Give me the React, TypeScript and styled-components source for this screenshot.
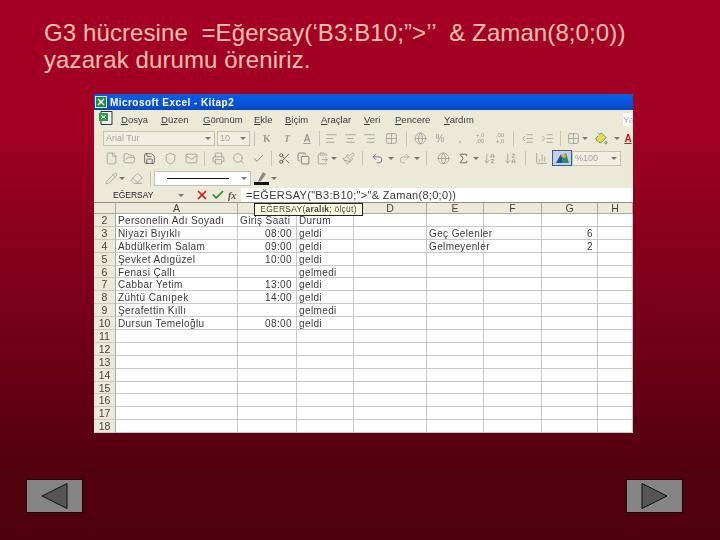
import React from "react";
import styled, { createGlobalStyle } from "styled-components";
import {
  AlignCenter,
  AlignLeft,
  AlignRight,
  ArrowDownAZ,
  ArrowDownZA,
  ChartColumn,
  Check,
  ClipboardPaste,
  Copy,
  Eraser,
  File,
  FolderOpen,
  Globe,
  Grid2x2,
  IndentDecrease,
  IndentIncrease,
  Mail,
  Paintbrush,
  PaintBucket,
  Pencil,
  Printer,
  Redo2,
  Save,
  Scissors,
  Search,
  Shield,
  Sigma,
  Undo2,
  X,
} from "lucide-react";

const GlobalStyle = createGlobalStyle`
    html, body {
        margin: 0;
        padding: 0;
    }
    body {
        width: 720px;
        height: 540px;
        overflow: hidden;
    }
`;

const Slide = styled.div`
    width: 720px;
    height: 540px;
    box-sizing: border-box;
    display: flex;
    flex-direction: column;
    background: linear-gradient(180deg, #a30024 0%, #a00022 25%, #52000f 87%, #4f000f 100%);
    font-family: "Liberation Sans", Arial, sans-serif;
`;

const Heading = styled.h1`
    margin: 0;
    height: 94px;
    box-sizing: border-box;
    padding: 19px 0 0 44px;
    color: #ffc0ae;
    font-size: 24px;
    font-weight: normal;
    line-height: 27px;
    letter-spacing: 0.1px;
    white-space: pre-wrap;
`;

const ExcelWindow = styled.div`
    position: relative;
    width: 539px;
    margin-left: 94px;
    background: #ece9d8;
    filter: blur(0.4px);
`;

const TitleBar = styled.div`
    height: 16px;
    display: flex;
    align-items: center;
    gap: 3px;
    padding-left: 1px;
    background: linear-gradient(180deg, #0a5ce6 0%, #0650d8 70%, #0a46b8 100%);
    color: #ffffff;
    font-size: 10px;
    font-weight: bold;
    letter-spacing: 0.45px;
`;

const MenuBar = styled.div`
    height: 18px;
    display: flex;
    align-items: center;
    padding-left: 4px;
    color: #3a3a3a;
    font-size: 9.5px;
`;

const MenuItem = styled.span<{ $w: number }>`
    width: ${(p) => p.$w}px;
    flex: none;
`;

const Mnemonic = styled.span`
    text-decoration: underline;
`;

const AskBox = styled.div`
    margin-left: 21px;
    width: 10px;
    height: 13px;
    background: #ffffff;
    color: #aaaaaa;
    line-height: 13px;
    overflow: hidden;
`;

const Toolbar = styled.div<{ $h: number }>`
    height: ${(p) => p.$h}px;
    display: flex;
    align-items: center;
    padding-left: 9px;
    overflow: hidden;
`;

const Tool = styled.div<{ $w: number; $c?: string }>`
    width: ${(p) => p.$w}px;
    height: 16px;
    flex: none;
    display: flex;
    align-items: center;
    justify-content: center;
    color: ${(p) => p.$c || "#9c9c94"};
    font-size: 10px;
`;

const ActiveTool = styled(Tool)`
    box-sizing: border-box;
    background: #c6d0e4;
    border: 1px solid #3a5a96;
`;

const Letter = styled.span<{ $serif?: boolean; $italic?: boolean; $under?: boolean }>`
    font-family: ${(p) => (p.$serif ? '"Liberation Serif", serif' : '"Liberation Sans", sans-serif')};
    font-weight: bold;
    font-style: ${(p) => (p.$italic ? "italic" : "normal")};
    text-decoration: ${(p) => (p.$under ? "underline" : "none")};
    font-size: 10px;
`;

const TinyDigits = styled.span`
    font-size: 6px;
    line-height: 6px;
    text-align: center;
`;

const Sep = styled.div<{ $gap?: number }>`
    width: 1px;
    height: 15px;
    flex: none;
    margin: 0 ${(p) => p.$gap ?? 3}px;
    background: #c8c5b4;
`;

const Arrow = styled.div`
    width: 6px;
    flex: none;
    height: 0;
    box-sizing: border-box;
    border-style: solid;
    border-width: 3px 3px 0;
    border-color: #777777 transparent transparent;
`;

const SelectBox = styled.div<{ $w: number; $bg?: string }>`
    width: ${(p) => p.$w}px;
    height: 15px;
    flex: none;
    box-sizing: border-box;
    margin-right: 2px;
    display: flex;
    align-items: center;
    justify-content: space-between;
    padding: 0 3px 0 2px;
    border: 1px solid #c4c2b2;
    background: ${(p) => p.$bg || "#f1efe2"};
    color: #a5a5a0;
    font-size: 9px;
`;

const LineSample = styled.div`
    width: 62px;
    height: 1px;
    margin-left: 10px;
    background: #111111;
`;

const FormulaBar = styled.div`
    height: 14px;
    display: flex;
    align-items: center;
    background: #ece9d8;
`;

const NameBox = styled.div`
    flex: none;
    display: flex;
    align-items: center;
    justify-content: space-between;
    padding: 0 6px 0 19px;
    box-sizing: border-box;
    width: 96px;
    color: #222222;
    font-size: 8.5px;
`;

const FormulaIcons = styled.div`
    width: 51px;
    flex: none;
    box-sizing: border-box;
    padding-left: 4px;
    display: flex;
    align-items: center;
    gap: 1px;
`;

const Fx = styled.span`
    font-family: "Liberation Serif", serif;
    font-size: 10px;
    font-style: italic;
    font-weight: bold;
    color: #555555;
    margin-left: 2px;
`;

const FormulaInput = styled.div`
    flex: 1;
    height: 14px;
    line-height: 14px;
    padding-left: 5px;
    background: #ffffff;
    color: #3a3a3a;
    font-size: 11px;
    letter-spacing: 0.3px;
    white-space: pre;
`;

const Sheet = styled.div`
    display: grid;
    grid-template-columns: 22px 122px 59px 57px 73px 57px 58px 56px 35px;
    grid-template-rows: 12px;
    grid-auto-rows: 12.9px;
    background: #ffffff;
    font-size: 10px;
    color: #3a3a3a;
    overflow: hidden;
`;

const ColHead = styled.div`
    box-sizing: border-box;
    text-align: center;
    line-height: 11px;
    background: #ece9d8;
    border-top: 1px solid #8f8f88;
    border-right: 1px solid #a9a89a;
    border-bottom: 1px solid #a9a89a;
    font-size: 10.5px;
    color: #444444;
`;

const RowHead = styled.div`
    box-sizing: border-box;
    text-align: center;
    line-height: 13px;
    background: #ece9d8;
    border-right: 1px solid #a9a89a;
    border-bottom: 1px solid #c9c8bc;
    font-size: 10.5px;
    color: #444444;
`;

const Cell = styled.div<{ $right?: boolean }>`
    box-sizing: border-box;
    line-height: 13.5px;
    padding: 0 ${(p) => (p.$right ? 4 : 2)}px 0 2px;
    text-align: ${(p) => (p.$right ? "right" : "left")};
    border-right: 1px solid #c8c8c8;
    border-bottom: 1px solid #c8c8c8;
    letter-spacing: 0.38px;
    white-space: nowrap;
`;

const Tooltip = styled.div`
    position: absolute;
    left: 160px;
    top: 109px;
    width: 109px;
    height: 13px;
    box-sizing: border-box;
    border: 1px solid #222222;
    background: #ffffe1;
    color: #444444;
    font-size: 8.5px;
    letter-spacing: 0.25px;
    line-height: 11px;
    text-align: center;
    white-space: nowrap;
`;

const Footer = styled.div`
    display: flex;
    justify-content: space-between;
    padding: 46px 37px 0 26px;
`;

const NavButton = styled.button`
    width: 57px;
    height: 34px;
    padding: 0;
    display: flex;
    align-items: center;
    justify-content: center;
    border: 1px solid #1a0a0a;
    background: #848484;
`;

const icon = { size: 13, strokeWidth: 1.5 };

const ExcelIcon = ({ size }: { size: number }) => (
  <svg width={size} height={size} viewBox="0 0 12 12">
    <rect x="0.5" y="0.5" width="11" height="11" fill="#1f8a3c" stroke="#d8ead8" />
    <path d="M3 3l6 6M9 3l-6 6" stroke="#ffffff" strokeWidth="1.5" />
  </svg>
);

const SheetDocIcon = () => (
  <svg width="16" height="15" viewBox="0 0 16 15">
    <path d="M3 .5h11v13H3z" fill="#f4f4ee" stroke="#333333" />
    <rect x="1" y="2" width="9" height="8" fill="#2a9a4a" />
    <path d="M3 4l5 4M8 4l-5 4" stroke="#ffffff" />
  </svg>
);

const PenLine = () => (
  <svg width="18" height="15" viewBox="0 0 18 15">
    <path d="M10 1l3 2-5 7-3 1 1-3z" fill="#8a8a80" />
    <rect x="1" y="11" width="15" height="3" fill="#111111" />
  </svg>
);

const DrawingIcon = () => (
  <svg width="15" height="14" viewBox="0 0 15 14">
    <path d="M1 12L6 3l2 9z" fill="#1d4f9c" />
    <path d="M7 12V5l4-3 3 10z" fill="#2a8a6a" />
    <circle cx="9" cy="5" r="2" fill="#e6b422" />
  </svg>
);

const menus: [string, string, number][] = [
  ["D", "osya", 40],
  ["D", "üzen", 42],
  ["G", "örünüm", 51],
  ["E", "kle", 31],
  ["B", "içim", 36],
  ["A", "raçlar", 43],
  ["V", "eri", 31],
  ["P", "encere", 49],
  ["Y", "ardım", 158],
];

const columns = ["A", "", "", "D", "E", "F", "G", "H"];

type Row = { n: number; name?: string; time?: string; state?: string; e?: string; g?: string };

const rows: Row[] = [
  { n: 2, name: "Personelin Adı Soyadı", time: "Giriş Saati", state: "Durum" },
  { n: 3, name: "Niyazi Bıyıklı", time: "08:00", state: "geldi", e: "Geç Gelenler", g: "6" },
  { n: 4, name: "Abdülkerim Salam", time: "09:00", state: "geldi", e: "Gelmeyenler", g: "2" },
  { n: 5, name: "Şevket Adıgüzel", time: "10:00", state: "geldi" },
  { n: 6, name: "Fenasi Çallı", state: "gelmedi" },
  { n: 7, name: "Cabbar Yetim", time: "13:00", state: "geldi" },
  { n: 8, name: "Zühtü Canıpek", time: "14:00", state: "geldi" },
  { n: 9, name: "Şerafettin Kıllı", state: "gelmedi" },
  { n: 10, name: "Dursun Temeloğlu", time: "08:00", state: "geldi" },
  { n: 11 },
  { n: 12 },
  { n: 13 },
  { n: 14 },
  { n: 15 },
  { n: 16 },
  { n: 17 },
  { n: 18 },
];

export default function App() {
  return (
    <Slide>
      <GlobalStyle />
      <Heading>{"G3 hücresine  =Eğersay(‘B3:B10;”>’’  & Zaman(8;0;0))\nyazarak durumu öreniriz."}</Heading>
      <ExcelWindow>
        <TitleBar>
          <ExcelIcon size={12} />
          Microsoft Excel - Kitap2
        </TitleBar>
        <MenuBar>
          <MenuItem $w={23}>
            <SheetDocIcon />
          </MenuItem>
          {menus.map(([first, rest, w], i) => (
            <MenuItem key={i} $w={w}>
              <Mnemonic>{first}</Mnemonic>
              {rest}
            </MenuItem>
          ))}
          <AskBox>Ya</AskBox>
        </MenuBar>
        <Toolbar $h={20}>
          <SelectBox $w={112}>
            Arial Tur
            <Arrow />
          </SelectBox>
          <SelectBox $w={33}>
            10
            <Arrow />
          </SelectBox>
          <Sep $gap={2} />
          <Tool $w={20}><Letter $serif>K</Letter></Tool>
          <Tool $w={20}><Letter $serif $italic>T</Letter></Tool>
          <Tool $w={20}><Letter $under>A</Letter></Tool>
          <Sep $gap={2} />
          <Tool $w={19}><AlignLeft {...icon} /></Tool>
          <Tool $w={19}><AlignCenter {...icon} /></Tool>
          <Tool $w={19}><AlignRight {...icon} /></Tool>
          <Tool $w={24}><Grid2x2 {...icon} /></Tool>
          <Sep />
          <Tool $w={20}><Globe {...icon} /></Tool>
          <Tool $w={20}>%</Tool>
          <Tool $w={20}>,</Tool>
          <Tool $w={20}><TinyDigits>+,0<br />,00</TinyDigits></Tool>
          <Tool $w={20}><TinyDigits>,00<br />+,0</TinyDigits></Tool>
          <Sep />
          <Tool $w={20}><IndentDecrease {...icon} /></Tool>
          <Tool $w={20}><IndentIncrease {...icon} /></Tool>
          <Sep />
          <Tool $w={18}><Grid2x2 {...icon} /></Tool>
          <Arrow />
          <Tool $w={26} $c="#5a7a8c"><PaintBucket {...icon} fill="#e8e040" /></Tool>
          <Arrow />
          <Tool $w={16} $c="#aa2222"><Letter $under>A</Letter></Tool>
        </Toolbar>
        <Toolbar $h={20}>
          <Tool $w={16}><File {...icon} /></Tool>
          <Tool $w={20}><FolderOpen {...icon} /></Tool>
          <Tool $w={20} $c="#555555"><Save {...icon} /></Tool>
          <Tool $w={22}><Shield {...icon} /></Tool>
          <Tool $w={20}><Mail {...icon} /></Tool>
          <Sep />
          <Tool $w={20}><Printer {...icon} /></Tool>
          <Tool $w={20}><Search {...icon} /></Tool>
          <Tool $w={20} $c="#6a7a8a"><Check {...icon} /></Tool>
          <Sep />
          <Tool $w={18} $c="#555555"><Scissors {...icon} /></Tool>
          <Tool $w={20} $c="#666666"><Copy {...icon} /></Tool>
          <Tool $w={18}><ClipboardPaste {...icon} /></Tool>
          <Arrow />
          <Tool $w={22}><Paintbrush {...icon} /></Tool>
          <Sep />
          <Tool $w={22} $c="#5a6a8c"><Undo2 {...icon} /></Tool>
          <Arrow />
          <Tool $w={20} $c="#a8a8a8"><Redo2 {...icon} /></Tool>
          <Arrow />
          <Sep $gap={6} />
          <Tool $w={20}><Globe {...icon} /></Tool>
          <Tool $w={20} $c="#555555"><Sigma {...icon} /></Tool>
          <Arrow />
          <Tool $w={21}><ArrowDownAZ {...icon} /></Tool>
          <Tool $w={20}><ArrowDownZA {...icon} /></Tool>
          <Sep $gap={5} />
          <Tool $w={21}><ChartColumn {...icon} /></Tool>
          <ActiveTool $w={20}><DrawingIcon /></ActiveTool>
          <SelectBox $w={49}>
            %100
            <Arrow />
          </SelectBox>
        </Toolbar>
        <Toolbar $h={20}>
          <Tool $w={16}><Pencil {...icon} /></Tool>
          <Arrow />
          <Tool $w={22}><Eraser {...icon} /></Tool>
          <Sep />
          <SelectBox $w={97} $bg="#ffffff">
            <LineSample />
            <Arrow />
          </SelectBox>
          <Tool $w={18} $c="#333333"><PenLine /></Tool>
          <Arrow />
        </Toolbar>
        <FormulaBar>
          <NameBox>
            EĞERSAY
            <Arrow />
          </NameBox>
          <FormulaIcons>
            <Tool $w={15} $c="#c8201c"><X size={14} strokeWidth={3} /></Tool>
            <Tool $w={15} $c="#2e8b2e"><Check size={14} strokeWidth={3} /></Tool>
            <Fx>fx</Fx>
          </FormulaIcons>
          <FormulaInput>{'=EĞERSAY("B3:B10;">"& Zaman(8;0;0))'}</FormulaInput>
        </FormulaBar>
        <Sheet>
          <ColHead />
          {columns.map((c, i) => (
            <ColHead key={i}>{c}</ColHead>
          ))}
          {rows.map((r) => (
            <React.Fragment key={r.n}>
              <RowHead>{r.n}</RowHead>
              <Cell>{r.name}</Cell>
              <Cell $right={r.n > 2}>{r.time}</Cell>
              <Cell>{r.state}</Cell>
              <Cell />
              <Cell>{r.e}</Cell>
              <Cell />
              <Cell $right>{r.g}</Cell>
              <Cell />
            </React.Fragment>
          ))}
        </Sheet>
        <Tooltip>
          EĞERSAY(<b>aralık</b>; ölçüt)
        </Tooltip>
      </ExcelWindow>
      <Footer>
        <NavButton aria-label="Önceki">
          <svg width="27" height="26" viewBox="0 0 27 26">
            <path d="M26 .5v25L1 13z" fill="#555555" stroke="#111111" />
          </svg>
        </NavButton>
        <NavButton aria-label="Sonraki">
          <svg width="27" height="26" viewBox="0 0 27 26">
            <path d="M1 .5v25L26 13z" fill="#555555" stroke="#111111" />
          </svg>
        </NavButton>
      </Footer>
    </Slide>
  );
}
